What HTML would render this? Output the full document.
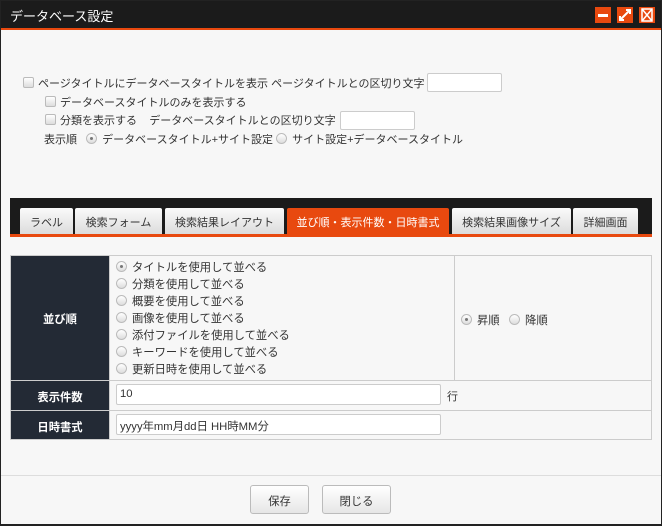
<!DOCTYPE html>
<html><head><meta charset="utf-8"><style>
*{box-sizing:border-box;margin:0;padding:0}
body{width:662px;height:526px;overflow:hidden;background:#222;font-family:"Liberation Sans","Noto Sans CJK JP",sans-serif;font-size:11.3px;color:#333}
.win{position:absolute;left:1px;top:1px;width:660px;height:523px;background:#f7f7f7}
.tb{position:absolute;left:0;top:0;width:660px;background:#1b1b1b;color:#fff;font-size:13px;padding:5px 0 0 9px;border-bottom:2px solid #e8490f;height:29px}
.ib{position:absolute;top:6px;width:16px;height:16px;background:#e8490f}
.t{position:absolute;white-space:nowrap;font-size:11px}
.cb{display:inline-block;width:11px;height:11px;border:1px solid #bbb;border-radius:2px;background:linear-gradient(#fff,#ddd);vertical-align:-1px;margin-right:4px}
.rd{display:inline-block;width:11px;height:11px;border:1px solid #bbb;border-radius:50%;background:linear-gradient(#fff,#ddd);vertical-align:-1px;margin-right:5px;position:relative}
.rd.on::after{content:"";position:absolute;left:3px;top:3px;width:3px;height:3px;border-radius:50%;background:#777}
.inp{position:absolute;background:#fff;border:1px solid #ccc;border-radius:2px;height:19px;padding:3px 3px;font-size:11.3px}
.tabs{position:absolute;left:9px;top:197px;width:642px;height:39px;background:#1b1b1b;border-bottom:3px solid #e8490f}
.tab{position:absolute;top:10px;height:26px;background:linear-gradient(#fafafa,#dcdcdc);border-radius:2px 2px 0 0;text-align:center;padding-top:6px;color:#333;white-space:nowrap;font-size:11px}
.tab.a{background:#e8490f;color:#fff}
.c{position:absolute;border:1px solid #ccc}
.l{background:#232a35;color:#fff;text-align:center;font-weight:bold}
.btn{position:absolute;top:484px;height:29px;border:1px solid #bbb;border-radius:3px;background:linear-gradient(#fff,#e6e6e6);text-align:center;padding-top:7px}
</style></head><body><div class="win">
<div class="tb">データベース設定</div>
<div class="ib" style="left:594px"><div style="position:absolute;left:3px;top:7px;width:10px;height:3px;background:#fff"></div></div>
<div class="ib" style="left:616px"><svg width="16" height="16"><path d="M3 13L13 3M9 3h4v4M3 9v4h4" stroke="#fff" stroke-width="2" fill="none"/></svg></div>
<div class="ib" style="left:638px"><svg width="16" height="16"><rect x="3" y="2" width="10" height="12" stroke="#fff" fill="none" stroke-width="1.5"/><path d="M3 2L13 14M13 2L3 14" stroke="#fff" stroke-width="1.5"/></svg></div>

<div class="t" style="left:22px;top:74px"><span class="cb"></span>ページタイトルにデータベースタイトルを表示&nbsp;ページタイトルとの区切り文字</div>
<div class="inp" style="left:426px;top:72px;width:75px"></div>
<div class="t" style="left:44px;top:93px"><span class="cb"></span>データベースタイトルのみを表示する</div>
<div class="t" style="left:44px;top:111px"><span class="cb"></span>分類を表示する&nbsp;&nbsp;&nbsp; データベースタイトルとの区切り文字</div>
<div class="inp" style="left:339px;top:110px;width:75px"></div>
<div class="t" style="left:43px;top:130px">表示順&nbsp;&nbsp; <span class="rd on"></span>データベースタイトル+サイト設定 <span class="rd"></span>サイト設定+データベースタイトル</div>

<div class="tabs">
<div class="tab" style="left:10px;width:53px">ラベル</div>
<div class="tab" style="left:65px;width:87px">検索フォーム</div>
<div class="tab" style="left:155px;width:119px">検索結果レイアウト</div>
<div class="tab a" style="left:277px;width:162px">並び順・表示件数・日時書式</div>
<div class="tab" style="left:442px;width:119px">検索結果画像サイズ</div>
<div class="tab" style="left:563px;width:65px">詳細画面</div>
</div>

<div class="c l" style="left:9px;top:254px;width:100px;height:126px;padding-top:55px">並び順</div>
<div class="c" style="left:108px;top:254px;width:346px;height:126px;padding:4px 6px;line-height:17px">
<div><span class="rd on"></span>タイトルを使用して並べる</div><div><span class="rd"></span>分類を使用して並べる</div><div><span class="rd"></span>概要を使用して並べる</div><div><span class="rd"></span>画像を使用して並べる</div><div><span class="rd"></span>添付ファイルを使用して並べる</div><div><span class="rd"></span>キーワードを使用して並べる</div><div><span class="rd"></span>更新日時を使用して並べる</div>
</div>
<div class="c" style="left:453px;top:254px;width:198px;height:126px;padding:56px 0 0 6px"><span class="rd on"></span>昇順&nbsp;&nbsp; <span class="rd"></span>降順</div>
<div class="c l" style="left:9px;top:379px;width:100px;height:31px;padding-top:8px">表示件数</div>
<div class="c" style="left:108px;top:379px;width:543px;height:31px"></div>
<div class="inp" style="left:115px;top:383px;width:325px;height:21px">10</div>
<div class="t" style="left:446px;top:387px">行</div>
<div class="c l" style="left:9px;top:409px;width:100px;height:30px;padding-top:8px">日時書式</div>
<div class="c" style="left:108px;top:409px;width:543px;height:30px"></div>
<div class="inp" style="left:115px;top:413px;width:325px;height:21px">yyyy年mm月dd日 HH時MM分</div>

<div style="position:absolute;left:0;top:474px;width:660px;border-top:1px solid #ddd"></div>
<div class="btn" style="left:249px;width:59px">保存</div>
<div class="btn" style="left:321px;width:69px">閉じる</div>
</div></body></html>
